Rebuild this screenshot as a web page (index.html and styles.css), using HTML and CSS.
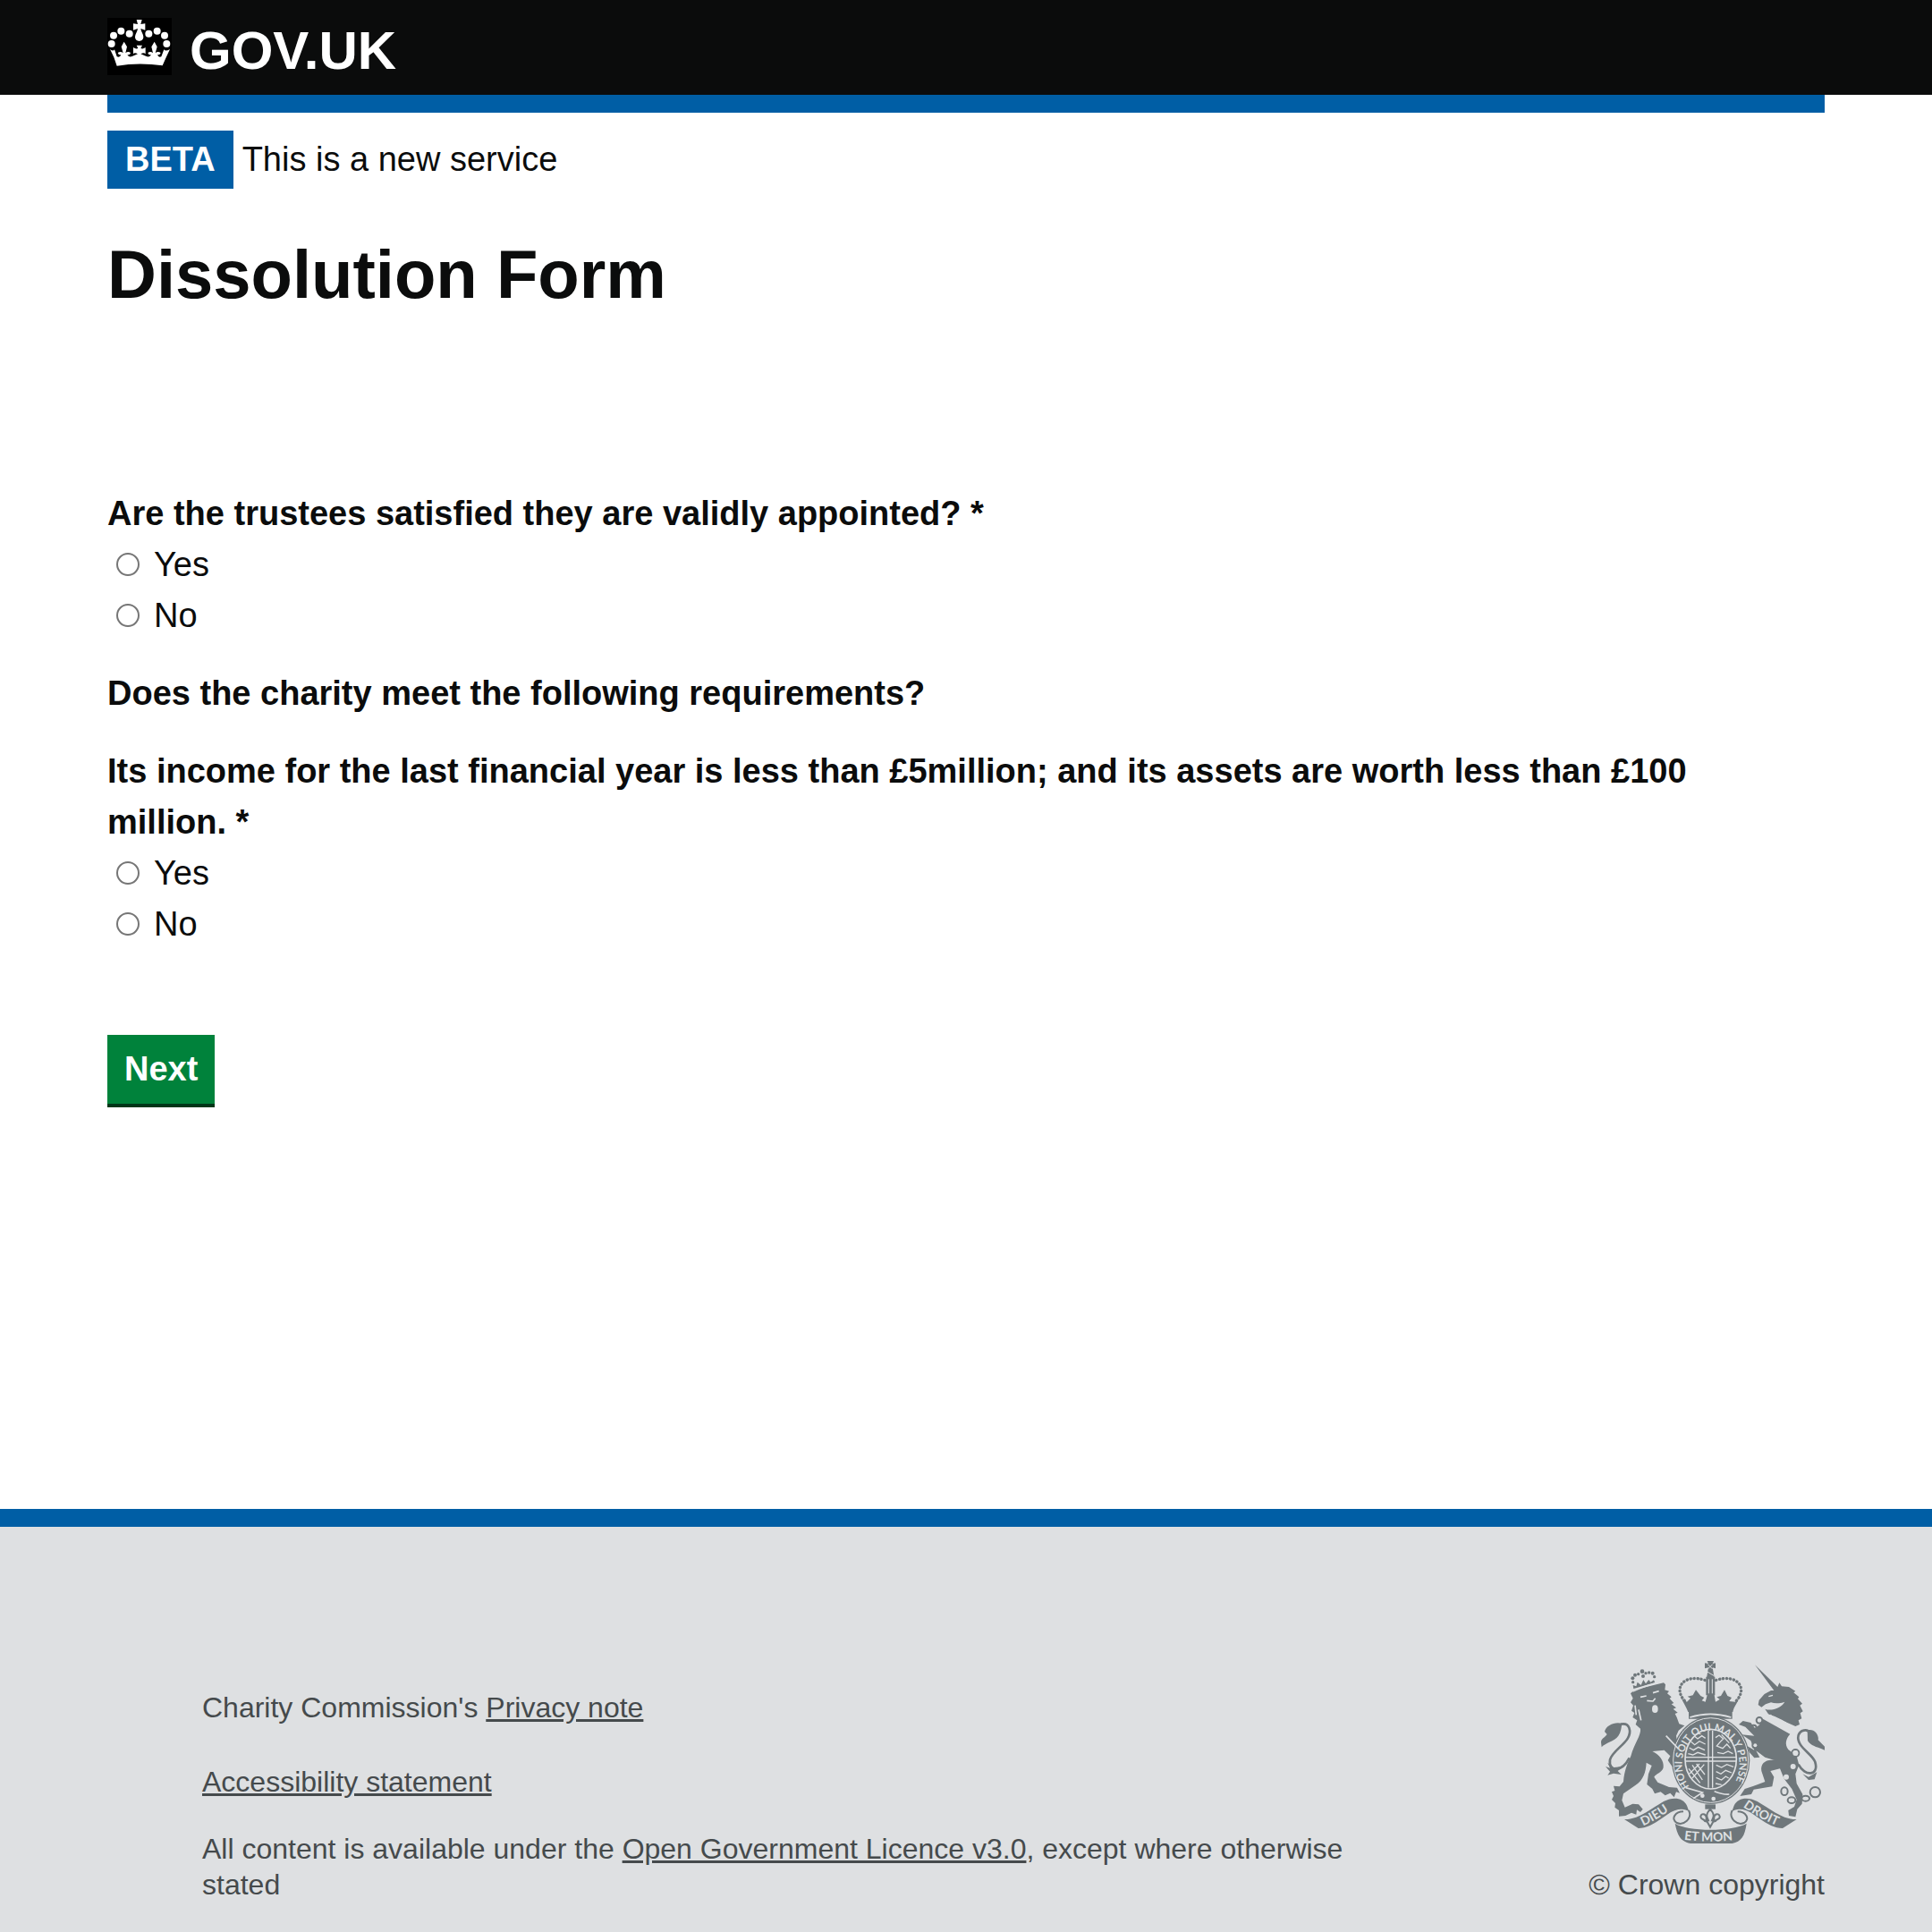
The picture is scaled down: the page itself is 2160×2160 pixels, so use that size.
FILE: index.html
```html
<!DOCTYPE html>
<html lang="en">
<head>
<meta charset="utf-8">
<meta name="viewport" content="width=device-width, initial-scale=1">
<title>Dissolution Form - GOV.UK</title>
<link rel="stylesheet" href="styles.css">
</head>
<body>
<header class="site-header">
  <a class="brand" href="#">
    <svg class="brand-crown" viewBox="60 60 216 192" aria-hidden="true">
      <rect x="60" y="60" width="216" height="192" fill="#000"/>
      <g fill="#fff">
        <circle cx="74" cy="147" r="12"/><circle cx="81" cy="119" r="12"/><circle cx="106" cy="104" r="12"/><circle cx="134" cy="113" r="12"/>
        <circle cx="259" cy="147" r="12"/><circle cx="252" cy="119" r="12"/><circle cx="227" cy="104" r="12"/><circle cx="199" cy="113" r="12"/>
        <path d="M158 66H176L172 81L187 79V101L172 96C173 106 181 114 181 124C181 133 174 138 167 138S153 133 153 124C153 114 161 106 162 96L147 101V79L162 81Z"/>
        <path d="M69 165Q80 174 84 166L92 190Q103 194 106 183Q98 186 95 177Q105 170 113 178L107 157L116 140L126 157L121 178Q129 170 138 177Q136 186 127 183Q131 193 143 189L162 181Q151 175 147 181V159Q156 166 163 162L158 152H177L172 162Q179 166 188 159V181Q183 175 172 181L191 189Q203 193 207 183Q198 186 196 177Q205 170 213 178L208 157L218 140L227 157L221 178Q229 170 239 177Q236 186 228 183Q231 194 241 190L250 166Q255 174 270 165Q258 190 245 220Q167 208 92 221Q84 192 69 165Z"/>
      </g>
    </svg>
    <span class="brand-name">GOV.UK</span>
  </a>
</header>

<main class="content">
  <div class="phase">
    <strong class="phase-tag">BETA</strong>
    <span>This is a new service</span>
  </div>
  <h1 class="title">Dissolution Form</h1>
  <form class="form">
    <fieldset class="question">
      <legend class="question-text">Are the trustees satisfied they are validly appointed? *</legend>
      <label class="option"><input class="radio" type="radio" name="appointed" value="yes">Yes</label>
      <label class="option"><input class="radio" type="radio" name="appointed" value="no">No</label>
    </fieldset>
    <p class="question-text">Does the charity meet the following requirements?</p>
    <fieldset class="question">
      <legend class="question-text">Its income for the last financial year is less than £5million; and its assets are worth less than £100 million.&nbsp;*</legend>
      <label class="option"><input class="radio" type="radio" name="income" value="yes">Yes</label>
      <label class="option"><input class="radio" type="radio" name="income" value="no">No</label>
    </fieldset>
    <button class="next" type="submit">Next</button>
  </form>
</main>

<footer class="site-footer">
  <div class="footer-inner">
    <div class="footer-meta">
      <p class="footer-privacy">Charity Commission's <a href="#">Privacy note</a></p>
      <p class="footer-access"><a href="#">Accessibility statement</a></p>
      <p>All content is available under the <a href="#">Open Government Licence v3.0</a>, except where otherwise stated</p>
    </div>
    <div class="footer-crown">
      <svg class="crest" viewBox="90 51 750 612" role="img" aria-label="Royal coat of arms">
        <defs>
          <path id="motto" d="M386 472A96 113 0 1 1 530 472"/>
          <path id="dieu" d="M231 604Q285 580 336 540"/>
          <path id="droit" d="M566 540Q620 580 692 608"/>
          <path id="etmon" d="M368 650Q457 662 550 650"/>
        </defs>
        <g class="crest-fill">
          <!-- lion -->
          <path d="M189 160L202 148L300 124L306 130L304 148L318 152L312 160L326 172L320 177L334 192L326 196L342 208L332 212L347 224L338 228L344 240L352 262L370 268L350 284L342 302L348 340L353 390L346 408L338 422L328 404L314 384L322 370L302 350L262 354C285 365 302 385 299 408C296 425 272 430 268 440L280 458L318 474L345 476L354 494L342 490L335 508L322 494L305 502L290 490L270 496L262 480L244 465L249 430L260 402L242 392C240 425 232 450 205 468L165 496L160 518L170 542L196 530L216 532L230 548L222 558L210 550L208 566L192 560L172 570L150 572L150 552L136 542L138 528L126 516L132 504L126 490L136 486L132 470L152 472L165 456C168 420 178 395 190 370C200 330 225 300 222 278L206 264L211 250L196 240L202 225L192 218L198 200L189 190L197 176Z"/>
          <path d="M160 261C140 253 106 266 102 288L110 297C100 310 90 312 90 324L92 340C105 324 134 322 148 302C157 290 158 275 160 261Z"/>
          <path d="M105 405L120 410L112 392L132 408L166 405L146 420L158 432L132 428L112 434L120 422Z"/>
          <path d="M199 144L197 132L208 136L212 122L224 132L232 114L240 127L250 114L256 122L267 115L271 124Z"/>
          <g>
            <circle cx="197" cy="122" r="5"/><circle cx="196" cy="109" r="6"/><circle cx="204" cy="98" r="6"/><circle cx="215" cy="95" r="5"/><circle cx="263" cy="92" r="6"/><circle cx="269" cy="104" r="5"/><circle cx="251" cy="90" r="5"/><circle cx="228" cy="86" r="7"/><circle cx="240" cy="92" r="5"/><circle cx="231" cy="102" r="6"/>
          </g>
          <!-- crown -->
          <path d="M446 51H468L464 60L474 58V76L464 73L470 108H444L450 73L438 76V58L450 60Z"/>
          <path d="M442 104H472V166H442ZM360 178L378 188L390 176L380 170L398 166L408 148L424 168L436 174L428 184L440 188L446 166L456 154L470 166L474 188L488 180L478 172L492 168L504 148L514 168L528 174L520 186L540 188L553 174C546 195 535 205 532 222H382C375 205 368 194 360 178Z"/>
          <path d="M384 222H530V245H384Z"/>
          <!-- garter -->
          <ellipse cx="458" cy="384" rx="131" ry="147"/>
          <path d="M439 532H474V548H439Z"/>
          <!-- unicorn -->
          <path d="M606 64L682 138L688 124L696 136L720 138L742 152L736 157L754 172L750 178L765 194L757 200L767 220L758 226L763 244L752 250L756 264L742 270L652 230L640 212C660 220 694 210 706 188C690 194 672 194 660 190L642 196L628 206L617 198L620 182L638 162L660 150L670 150Z"/>
          <path d="M634 246L724 296C710 312 705 330 718 348L746 370L754 400L742 430L746 462L766 498L764 530L748 548L742 574L720 570L718 552L738 540L746 516L730 480L704 446L690 412L658 420L670 440L664 472L602 482L594 498L556 504L572 480L602 470L640 456L628 420C624 395 642 380 672 384L640 374L610 352L622 374L604 376L588 358L580 336L604 350L592 318L562 298L604 302L574 272L552 264L566 252L592 258L606 276L620 266Z"/>
          <path d="M782 283C804 276 822 298 818 316L840 338V350C820 340 794 338 783 318Z"/>
          <path d="M766 430L786 440L814 424L806 448L786 450Z"/>
          <!-- ribbons -->
          <path d="M168 582C215 584 260 545 300 522C330 506 365 508 378 536L385 556C370 544 340 545 312 566C270 596 245 612 215 612Z"/>
          <path d="M746 582C699 584 654 545 614 522C584 506 549 508 536 536L529 556C544 544 574 545 602 566C644 596 669 612 699 612Z"/>
          <path d="M338 596C380 624 532 624 578 596C572 640 560 656 530 663H390C350 655 345 625 338 596Z"/>
        </g>
        <g class="crest-line">
          <path d="M185 376C160 424 114 425 120 382C130 345 200 320 184 275C180 264 170 260 156 263"/>
          <path class="crest-beads" d="M370 184C330 140 370 92 440 116M544 184C584 140 544 92 474 116"/>
          <path d="M752 398C774 440 822 436 808 390C800 362 742 338 752 300C758 282 782 278 788 290"/>
          <path d="M384 552C398 580 366 604 344 594C322 580 340 556 366 556M530 552C516 580 548 604 570 594C592 580 574 556 548 556" stroke-width="6"/>
          <path d="M456 548C438 568 446 576 450 586H442C448 564 428 558 424 572C424 584 436 580 438 588L446 590L456 608L466 590L474 588C476 580 490 584 488 572C484 558 464 564 470 586H462C466 576 474 568 456 548Z" stroke-width="6"/>
          <g stroke-width="6">
            <circle cx="621" cy="250" r="10"/><circle cx="602" cy="275" r="9"/><circle cx="607" cy="334" r="9"/><circle cx="742" cy="360" r="12"/><ellipse cx="705" cy="488" rx="11" ry="13"/><ellipse cx="729" cy="518" rx="13" ry="10"/><ellipse cx="776" cy="512" rx="13" ry="9"/><circle cx="808" cy="491" r="17"/>
          </g>
        </g>
        <g class="crest-cut">
          <path d="M196 153Q240 133 298 119M388 240Q456 218 526 240M651 232Q700 246 742 284M641 242Q690 260 730 296" stroke-width="5"/>
          <path d="M451 112V160M463 112V160" stroke-width="3"/>
          <path d="M222 172L242 168M264 158L284 152M244 184L264 186L272 176M204 200L208 232M216 214L224 250M308 302L350 346" stroke-width="5"/>
          <path d="M654 250L660 234L678 260L684 248L700 274L708 258L722 284" stroke-width="4"/>
          <path d="M448 62L464 78M464 62L448 78M444 86L468 100" stroke-width="3"/>
          <path d="M652 170L666 166" stroke-width="4"/>
          <path d="M374 476L430 492L400 512M470 488Q500 500 520 498" stroke-width="5"/>
          <ellipse cx="458" cy="384" rx="126" ry="142" stroke-width="3"/>
          <ellipse cx="458" cy="380" rx="86" ry="100" stroke-width="5"/>
          <path d="M450 284V476M464 284V476M374 374H544M374 387H544" stroke-width="4"/>
          <path d="M404 304L414 312L428 302L440 310M392 322L404 332L420 320L440 330M386 342L400 350L416 340L438 350M382 362L398 366L414 358L440 366M474 308L486 300L500 312L490 322L478 336L498 344L512 330L524 344M480 358L500 362L516 354L532 362M396 400L430 450M384 412L422 460M410 396L438 432M436 398L396 444M420 396L386 430M476 400L494 408L512 398L534 406M476 422L492 430L508 418L528 426M476 442L494 450L508 438L518 444M474 462L494 466M494 298L520 326" stroke-width="4"/>
        </g>
        <g class="crest-dots">
          <ellipse cx="271" cy="212" rx="10" ry="13"/><circle cx="430" cy="503" r="7"/><circle cx="467" cy="513" r="7"/><circle cx="734" cy="405" r="9"/><circle cx="711" cy="440" r="9"/><circle cx="607" cy="334" r="6"/><circle cx="742" cy="360" r="9"/>
        </g>
        <g class="crest-text">
          <text><textPath href="#motto">HONI SOIT QUI MAL Y PENSE</textPath></text>
          <text class="crest-text-large"><textPath href="#dieu">DIEU</textPath></text>
          <text class="crest-text-large"><textPath href="#droit">DROIT</textPath></text>
          <text class="crest-text-large"><textPath href="#etmon">ET MON</textPath></text>
        </g>
      </svg>
      <span>© Crown copyright</span>
    </div>
  </div>
</footer>
</body>
</html>
```
FILE: styles.css
```css
* {
  box-sizing: border-box;
}

body {
  margin: 0;
  min-height: 100vh;
  display: flex;
  flex-direction: column;
  background: #fff;
  color: #0b0c0c;
  font-family: "Liberation Sans", Arial, Helvetica, sans-serif;
  font-size: 38px;
  line-height: 57px;
}

p,
h1 {
  margin: 0;
}

.site-header {
  padding: 20px 120px 12px;
  background: #0b0c0c;
}

.brand {
  display: inline-flex;
  align-items: flex-start;
  gap: 20px;
  color: #fff;
  text-decoration: none;
  vertical-align: top;
}

.brand-crown {
  display: block;
  width: 72px;
  height: 64px;
}

.brand-name {
  font-size: 60px;
  line-height: 74px;
  font-weight: 700;
}

.content {
  flex: 1;
  margin: 0 120px;
  border-top: 20px solid #005ea5;
  padding-top: 20px;
}

.phase {
  display: flex;
  align-items: center;
  gap: 10px;
}

.phase-tag {
  padding: 4px 20px;
  background: #005ea5;
  color: #fff;
}

.title {
  margin-top: 54px;
  font-size: 76px;
  line-height: 84px;
}

.form {
  margin-top: 197px;
  display: flex;
  flex-direction: column;
  align-items: flex-start;
  gap: 30px;
}

.question {
  margin: 0;
  border: 0;
  padding: 0;
  min-width: 0;
}

.question-text {
  padding: 0;
  font-weight: 700;
}

.option {
  display: flex;
  align-items: center;
  width: fit-content;
}

.radio {
  appearance: none;
  width: 26px;
  height: 26px;
  margin: 0 16px 2px 10px;
  border: 2px solid #767676;
  border-radius: 50%;
  background: #fff;
}

.radio:checked {
  background: radial-gradient(#0b0c0c 50%, #fff 55%);
}

.next {
  margin-top: 65px;
  border: 0;
  border-bottom: 4px solid #003618;
  border-radius: 0;
  padding: 10px 19px;
  background: #00823b;
  color: #fff;
  font: inherit;
  font-weight: 700;
}

.site-footer {
  border-top: 20px solid #005ea5;
  padding: 150px 120px 33px;
  background: #dee0e2;
  color: #454a4c;
  font-size: 32px;
  line-height: 40px;
}

.footer-inner {
  display: flex;
  justify-content: space-between;
  align-items: flex-end;
}

.footer-meta {
  width: 74%;
  padding-left: 106px;
}

.footer-privacy {
  margin-bottom: 43px;
}

.footer-access {
  margin-bottom: 35px;
}

.site-footer a {
  color: inherit;
}

.footer-crown {
  display: flex;
  flex-direction: column;
  align-items: flex-end;
  gap: 26px;
  white-space: nowrap;
}

.crest {
  display: block;
  width: 250px;
  height: 204px;
}

.crest-fill {
  fill: #6f777b;
}

.crest-line {
  fill: none;
  stroke: #6f777b;
  stroke-width: 8px;
}

.crest-beads {
  stroke-width: 10px;
  stroke-linecap: round;
  stroke-dasharray: 1 11;
}

.crest-cut {
  fill: none;
  stroke: #dee0e2;
}

.crest-dots {
  fill: #dee0e2;
}

.crest-text {
  fill: #dee0e2;
  font-family: Lato, "Liberation Sans", sans-serif;
  font-size: 34px;
  font-weight: 700;
}

.crest-text-large {
  font-size: 42px;
}
```
